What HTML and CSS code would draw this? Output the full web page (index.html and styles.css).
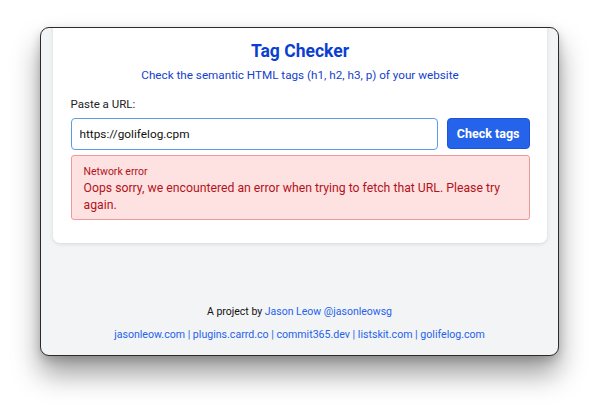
FILE: index.html
```html
<!DOCTYPE html>
<html lang="en">
<head>
<meta charset="utf-8">
<title>Tag Checker</title>
<link rel="stylesheet" href="styles.css">
</head>
<body>
<div class="stage">
  <div class="window">
    <main class="card">
      <h1 class="title">Tag Checker</h1>
      <p class="subtitle">Check the semantic HTML tags (h1, h2, h3, p) of your website</p>
      <label class="label" for="url">Paste a URL:</label>
      <div class="row">
        <input class="input" id="url" type="text" value="https://golifelog.cpm">
        <button class="btn" type="button">Check tags</button>
      </div>
      <div class="error">
        <div class="error-title">Network error</div>
        <div class="error-msg">Oops sorry, we encountered an error when trying to fetch that URL. Please try again.</div>
      </div>
    </main>
    <footer class="footer">
      <p class="credit">A project by <a href="#">Jason Leow</a> <a href="#">@jasonleowsg</a></p>
      <p class="links"><a href="#">jasonleow.com</a> | <a href="#">plugins.carrd.co</a> | <a href="#">commit365.dev</a> | <a href="#">listskit.com</a> | <a href="#">golifelog.com</a></p>
    </footer>
  </div>
</div>
</body>
</html>
```

FILE: styles.css
```css
* { box-sizing: border-box; }
html, body { margin: 0; padding: 0; background: #ffffff; }
body {
  font-family: Roboto, Inter, "Liberation Sans", sans-serif;
  width: 600px;
  height: 410px;
  overflow: hidden;
}
.stage {
  padding: 27px 41px 0 40px;
}
.window {
  width: 519px;
  height: 329px;
  background: #f3f4f6;
  border: 1.5px solid #2b2b2b;
  border-radius: 9px;
  overflow: hidden;
  box-shadow: 0 18px 28px rgba(0,0,0,0.38), 0 4px 10px rgba(0,0,0,0.18);
  display: flex;
  flex-direction: column;
  align-items: center;
}
.card {
  width: 494px;
  margin-top: -10px;
  background: #ffffff;
  border-radius: 7px;
  box-shadow: 0 1px 4px rgba(0,0,0,0.12);
  padding: 22px 17px 23px 18px;
  display: flex;
  flex-direction: column;
}
.title {
  margin: 0;
  text-align: center;
  font-size: 17.5px;
  font-weight: 700;
  color: #0b3fcf;
  line-height: 22px;
}
.subtitle {
  margin: 4px 0 0;
  text-align: center;
  font-size: 11.7px;
  color: #143fcb;
  line-height: 18px;
}
.label {
  margin-top: 12px;
  font-size: 11.5px;
  color: #222;
  line-height: 16px;
}
.row {
  margin-top: 6px;
  display: flex;
  align-items: flex-start;
  gap: 9px;
}
.input {
  flex: 1;
  height: 32px;
  border: 1.5px solid #5b9bea;
  border-radius: 4px;
  padding: 0 8px;
  font-family: inherit;
  font-size: 11.8px;
  color: #111;
  outline: none;
}
.btn {
  height: 31px;
  padding: 0 9px;
  background: #2563eb;
  color: #fff;
  border: 1px solid #1d55d8;
  border-radius: 4px;
  font-family: inherit;
  font-size: 12.5px;
  font-weight: 700;
}
.error {
  margin-top: 5px;
  background: #fee2e2;
  border: 1px solid #ef9a9a;
  border-radius: 3px;
  padding: 9px 12px 5px 12px;
  color: #b3121a;
}
.error-title {
  font-size: 10.5px;
  line-height: 14px;
}
.error-msg {
  margin-top: 1px;
  font-size: 12.25px;
  line-height: 17px;
}
.footer {
  margin-top: auto;
  padding-bottom: 13px;
  text-align: center;
  font-size: 10.6px;
}
.footer p { margin: 0; line-height: 14px; }
.credit { color: #111; font-size: 10.5px; }
.links { margin-top: 9px !important; color: #2563eb; }
.footer a { color: #2563eb; text-decoration: none; }
```
